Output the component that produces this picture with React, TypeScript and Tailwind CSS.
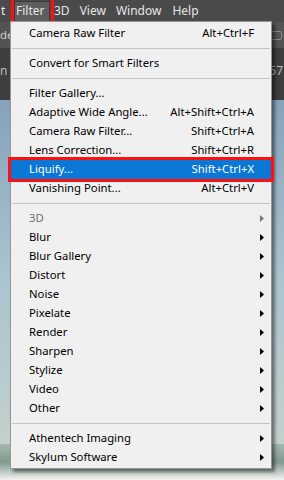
import React from "react";

type Entry =
  | { kind: "sep" }
  | { kind: "item"; label: string; shortcut?: string; sub?: boolean; disabled?: boolean; active?: boolean };

const entries: Entry[] = [
  { kind: "item", label: "Camera Raw Filter", shortcut: "Alt+Ctrl+F" },
  { kind: "sep" },
  { kind: "item", label: "Convert for Smart Filters" },
  { kind: "sep" },
  { kind: "item", label: "Filter Gallery..." },
  { kind: "item", label: "Adaptive Wide Angle...", shortcut: "Alt+Shift+Ctrl+A" },
  { kind: "item", label: "Camera Raw Filter...", shortcut: "Shift+Ctrl+A" },
  { kind: "item", label: "Lens Correction...", shortcut: "Shift+Ctrl+R" },
  { kind: "item", label: "Liquify...", shortcut: "Shift+Ctrl+X", active: true },
  { kind: "item", label: "Vanishing Point...", shortcut: "Alt+Ctrl+V" },
  { kind: "sep" },
  { kind: "item", label: "3D", sub: true, disabled: true },
  { kind: "item", label: "Blur", sub: true },
  { kind: "item", label: "Blur Gallery", sub: true },
  { kind: "item", label: "Distort", sub: true },
  { kind: "item", label: "Noise", sub: true },
  { kind: "item", label: "Pixelate", sub: true },
  { kind: "item", label: "Render", sub: true },
  { kind: "item", label: "Sharpen", sub: true },
  { kind: "item", label: "Stylize", sub: true },
  { kind: "item", label: "Video", sub: true },
  { kind: "item", label: "Other", sub: true },
  { kind: "sep" },
  { kind: "item", label: "Athentech Imaging", sub: true },
  { kind: "item", label: "Skylum Software", sub: true },
];

function Arrow({ color }: { color: string }) {
  return (
    <svg width="4" height="7" viewBox="0 0 4 7">
      <path d="M0 0 L4 3.5 L0 7 Z" fill={color} />
    </svg>
  );
}

export default function App() {
  return (
    <div
      className="relative w-[284px] h-[480px] overflow-hidden text-[11.3px]"
      style={{ fontFamily: '"Noto Sans", "Open Sans", sans-serif' }}
    >
      {/* app chrome behind the menu */}
      <div className="flex flex-col h-full">
        <div className="h-[22px] bg-[#4a4a4a] flex items-center text-[#e6e6e6] text-[12px]">
          <span className="ml-[1px] w-[13px]">t</span>
          <div className="h-[21px] w-[36px] pl-[1px] flex items-center bg-[#5e5e5e] border border-[#3a3a3a]">Filter</div>
          <span className="ml-[4px]">3D</span>
          <span className="ml-[10px]">View</span>
          <span className="ml-[10px]">Window</span>
          <span className="ml-[11px]">Help</span>
        </div>
        <div className="h-[26px] bg-[#535353] flex items-center justify-between text-[#d0d0d0]">
          <span>de</span>
          <div className="w-[12px] h-[9px] rounded-[2px] border border-[#8a8a8a] mr-[2px]" />
        </div>
        <div className="h-[52px] bg-[#3e3e3e] flex items-start justify-between pt-[14px] text-[#bdbdbd] text-[12px]">
          <span>n</span>
          <span className="mr-[1px]">57</span>
        </div>
        <div className="flex-1 bg-gradient-to-b from-[#86a2ba] via-[#a9c3cf] to-[#c3d0cc]" />
        <div className="h-[36px] bg-gradient-to-b from-[#a5b8ae] via-[#819a8e] to-[#f2f4f2]" />
      </div>

      {/* red annotation around Filter */}
      <div className="absolute left-[11px] -top-[4px] w-[43px] h-[30px] border-[3px] border-[#ff1010] pointer-events-none" />

      {/* dropdown menu */}
      <div className="absolute left-[10px] top-[21px] w-[262px] bg-[#f0f0f0] border border-[#979797] pt-[2px] pb-[1px] shadow-[3px_3px_3px_rgba(0,0,0,0.45)]">
        {entries.map((e, i) =>
          e.kind === "sep" ? (
            <div key={i} className="h-[11px] flex items-center px-[1px]">
              <div className="h-px w-full bg-[#c4c4c4]" />
            </div>
          ) : (
            <div
              key={i}
              className={`relative h-[19px] flex items-center pl-[18px] pr-[7px] ${
                e.active ? "bg-[#0a78d4] text-white" : e.disabled ? "text-[#6f6f6f]" : "text-black"
              }`}
            >
              <span className="flex-1 whitespace-nowrap">{e.label}</span>
              {e.shortcut && <span className="whitespace-nowrap">{e.shortcut}</span>}
              <div className="w-[4px] ml-[6px] flex items-center">
                {e.sub && <Arrow color={e.disabled ? "#7a7a7a" : "#000"} />}
              </div>
              {e.active && (
                <div className="absolute -left-[3px] -right-[3px] -top-[3px] -bottom-[3px] border-[3px] border-[#ff1010] pointer-events-none" />
              )}
            </div>
          )
        )}
      </div>
    </div>
  );
}
